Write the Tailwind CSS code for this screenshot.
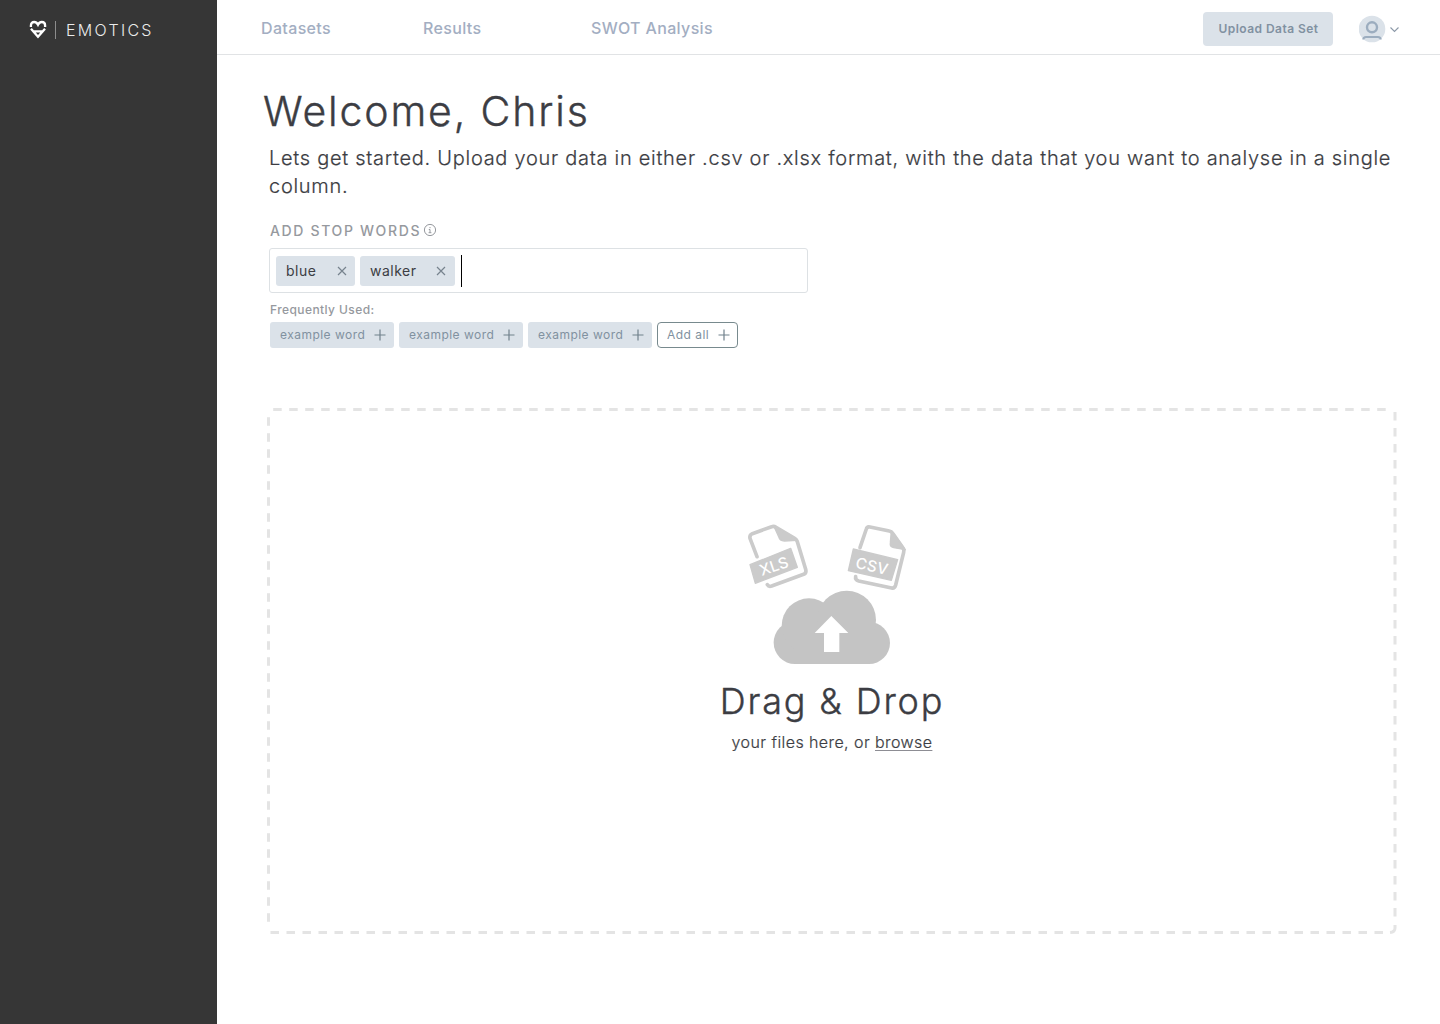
<!DOCTYPE html>
<html lang="en">
<head>
<meta charset="utf-8">
<title>Emotics</title>
<script src="https://cdn.jsdelivr.net/npm/@tailwindcss/browser@4"></script>
</head>
<body class="flex h-[1024px] w-[1440px] overflow-hidden bg-white font-['Inter',sans-serif] text-[#3c3d43]">
<aside class="w-[217px] shrink-0 bg-[#363636]">
  <div class="flex items-center pl-[29px] pt-[20px] h-[40px] text-[#ececec]">
    <svg class="block h-[20px] w-[18px]" viewBox="0 0 18 20" fill="none" stroke="#fff" stroke-width="2.300">
      <path d="M1.900 7V5.400C1.900 3.200 3.300 2 5.200 2 7 2 8.200 3.200 9 4.700 9.800 3.200 11 2 12.800 2c1.900 0 3.300 1.200 3.300 3.400V7M2 8.700 9 16.800l7-8.100M5 11.400h8"/>
    </svg>
    <span class="ml-[8px] h-[18px] w-px bg-[#8c8c8c]"></span>
    <span class="ml-[10px] text-[16px] font-light tracking-[2.300px] whitespace-nowrap">EMOTICS</span>
  </div>
</aside>
<div class="flex min-w-0 flex-1 flex-col">
  <header class="flex h-[55px] shrink-0 items-center border-b border-[#e1e3e5] pl-[44px] pr-[41px] pt-[4px]">
    <nav class="-mt-[2px] flex items-center whitespace-nowrap text-[16px] font-medium tracking-[0.350px] text-[#a3aec2]">
      <a class="w-[162px]">Datasets</a>
      <a class="w-[168px]">Results</a>
      <a>SWOT Analysis</a>
    </nav>
    <button class="ml-auto flex h-[34px] w-[130px] items-center justify-center rounded-[4px] bg-[#dbe2e9] pl-px text-[12px] font-semibold tracking-[0.460px] text-[#8191a1]">Upload Data Set</button>
    <svg class="ml-[26px] block h-[28px] w-[40px]" viewBox="0 0 40 28" fill="none" stroke="#9cadbf">
      <circle cx="13" cy="14" r="13.300" fill="#dbe2e9" stroke="none"/>
      <circle cx="13" cy="12.300" r="5" stroke-width="2.400"/>
      <path d="M4.300 24.500c0-1.600 1.300-2.500 2.800-2.500h11.800c1.500 0 2.800.9 2.800 2.500" stroke-width="2"/>
      <path d="m31.500 12.500 4 4 4-4" stroke="#8c99a8" stroke-width="1.100"/>
    </svg>
  </header>
  <main class="pl-[50px] pr-[42px]">
    <h1 class="-ml-[4px] mt-[30px] h-[52px] whitespace-nowrap text-[41px] leading-[52px] font-light tracking-[1.870px] [-webkit-text-stroke:0.4px_#3c3d43]">Welcome, Chris</h1>
    <p class="ml-[2px] mt-[7px] whitespace-nowrap text-[20px] leading-[28px] font-light tracking-[0.715px] [-webkit-text-stroke:0.2px_#3c3d43]">Lets get started. Upload your data in either .csv or .xlsx format, with the data that you want to analyse in a single<br>column.</p>
    <div class="ml-[3px] mt-[20px] flex h-[20px] items-center text-[14px] font-medium text-[#96999e]">
      <span class="tracking-[1.660px]">ADD STOP WORDS</span>
      <svg class="ml-[2px] block size-[14px]" viewBox="0 0 14 14" fill="none" stroke="#96999e"><circle cx="7" cy="7" r="5.600"/><path d="M7 4v1.200M5.800 6.500H7v3M5.600 9.700h2.800"/></svg>
    </div>
    <div class="ml-[2px] mt-[8px] flex h-[45px] w-[538.500px] items-center gap-[5px] rounded-[3px] border border-[#dde1e4] pl-[6px] text-[14px] tracking-[0.500px]">
      <span class="flex h-[30px] w-[79px] items-center justify-between rounded-[3px] bg-[#dbe2e9] pl-[10px] pr-[8px]">blue
        <svg class="block size-[10px]" viewBox="0 0 10 10" stroke="#77838e" stroke-width="1.200"><path d="m1 1 8 8m0-8-8 8"/></svg></span>
      <span class="flex h-[30px] w-[95px] items-center justify-between rounded-[3px] bg-[#dbe2e9] pl-[10px] pr-[9px]">walker
        <svg class="block size-[10px]" viewBox="0 0 10 10" stroke="#77838e" stroke-width="1.200"><path d="m1 1 8 8m0-8-8 8"/></svg></span>
      <span class="ml-px h-[32px] w-px bg-black"></span>
    </div>
    <div class="ml-[3px] mt-[9px] h-[16px] text-[12px] leading-[16px] font-medium tracking-[0.420px] text-[#96999e]">Frequently Used:</div>
    <div class="ml-[3px] mt-[4px] flex gap-[5px] whitespace-nowrap text-[12px] tracking-[0.470px] text-[#8191a0]">
      <span class="flex h-[26px] w-[124px] items-center justify-between rounded-[3px] bg-[#dbe2e9] pl-[10px] pr-[8px]">example word
        <svg class="block size-[12px]" viewBox="0 0 12 12" stroke="#71818c" stroke-width="1.200"><path d="M6 .5v11M.5 6h11"/></svg></span>
      <span class="flex h-[26px] w-[124px] items-center justify-between rounded-[3px] bg-[#dbe2e9] pl-[10px] pr-[8px]">example word
        <svg class="block size-[12px]" viewBox="0 0 12 12" stroke="#71818c" stroke-width="1.200"><path d="M6 .5v11M.5 6h11"/></svg></span>
      <span class="flex h-[26px] w-[124px] items-center justify-between rounded-[3px] bg-[#dbe2e9] pl-[10px] pr-[8px]">example word
        <svg class="block size-[12px]" viewBox="0 0 12 12" stroke="#71818c" stroke-width="1.200"><path d="M6 .5v11M.5 6h11"/></svg></span>
      <span class="flex h-[26px] w-[81px] items-center justify-between rounded-[4px] border border-[#788a8e] pl-[9px] pr-[7px]">Add all
        <svg class="block size-[12px]" viewBox="0 0 12 12" stroke="#71818c" stroke-width="1.200"><path d="M6 .5v11M.5 6h11"/></svg></span>
    </div>
    <section class="mt-[60px] grid h-[526px] w-[1130px] *:col-start-1 *:row-start-1">
      <svg class="block h-[526px] w-[1130px]" viewBox="0 0 1130 526" fill="none" stroke="#e4e4e4" stroke-width="3" stroke-dasharray="8.500 7.500">
        <path d="M6.200 1.500H1120"/>
        <path d="M1128 4V512"/>
        <path d="M3.500 524.500H1116"/>
        <path d="M1.500 9.200V519"/>
        <path d="M1128 517v3q0 4-5 4.500" stroke-dasharray="none"/>
      </svg>
      <div class="flex flex-col items-center pt-[107px]">
        <svg class="block h-[160px] w-[190px]" viewBox="6 0 570 480" fill="none">
          <g fill="#c4c4c4"><circle cx="180" cy="383" r="64"/><circle cx="402" cy="384" r="63"/><circle cx="222" cy="332" r="82"/><circle cx="335" cy="315" r="88"/><path d="M180 340H402V447H180Z"/></g>
          <path d="m289 303 51 51h-27v57h-46v-57h-28Z" fill="#fff"/>
          <g stroke="#cbcbcb" stroke-width="11" stroke-linecap="round" stroke-linejoin="round">
            <path d="M66 125 45 70q-2-10 7-14L110 35q7-2 13 2l57 34q5 3 7 9l25 83q3 11-6 15L110 213q-9 3-13-4"/>
            <path d="M375 98 394 42q2-8 11-6l58 12q6 1 10 7l31 44q4 6 2 13L482 210q-3 11-12 9L371 198q-11-3-9-13"/>
          </g>
          <g fill="#cbcbcb" stroke="#cbcbcb" stroke-width="4" stroke-linejoin="round">
            <path d="m116 32 70 44-38 2q-14 0-17-13ZM45 149 167 100l20 57L61 205Z"/>
            <path d="m469 47 42 57-35-6q-12-2-10-15ZM355 102l133 32-19 62-129-29Z"/>
          </g>
          <g fill="#fff" font-size="46" font-weight="500" text-anchor="middle">
            <text transform="translate(122 169) rotate(-19)" textLength="88">XLS</text>
            <text transform="translate(407 169) rotate(13)" textLength="98">CSV</text>
          </g>
        </svg>
        <h2 class="mt-[3px] h-[46px] whitespace-nowrap text-[36px] leading-[46px] font-light tracking-[1.850px] [-webkit-text-stroke:0.4px_#3c3d43]">Drag &amp; Drop</h2>
        <p class="mt-[6px] whitespace-nowrap text-[16px] leading-[24px] font-light tracking-[0.420px] [-webkit-text-stroke:0.2px_#3c3d43]">your files here, or <a class="underline decoration-[#8d8d94] decoration-1 underline-offset-2">browse</a></p>
      </div>
    </section>
  </main>
</div>
</body>
</html>
